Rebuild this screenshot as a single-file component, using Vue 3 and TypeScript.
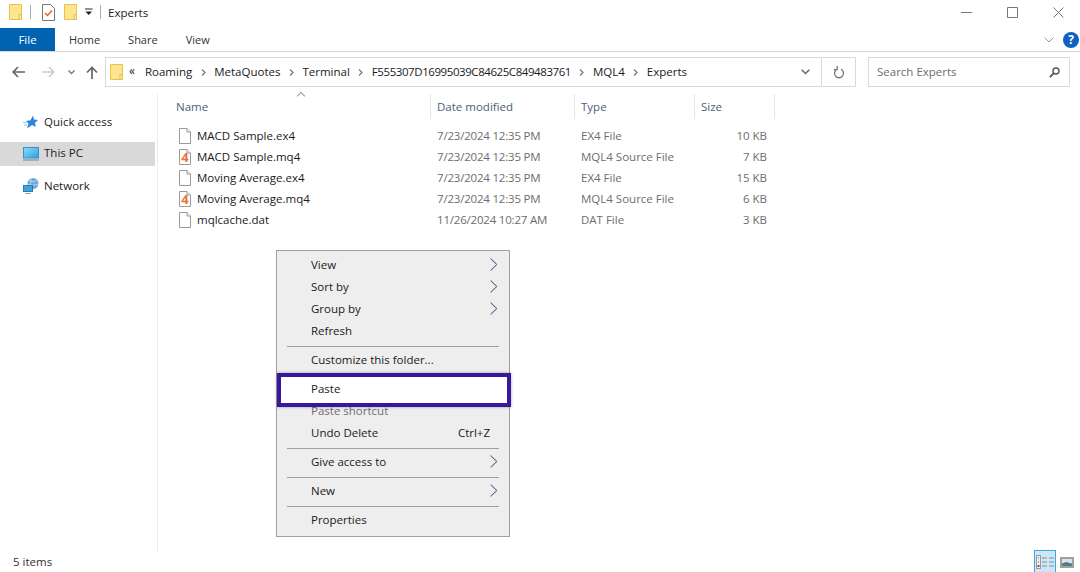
<script setup lang="ts">
interface FileRow {
  name: string
  date: string
  type: string
  size: string
  source: boolean
}

interface MenuEntry {
  label?: string
  sub?: boolean
  key?: string
  disabled?: boolean
  sep?: boolean
  paste?: boolean
}

const files: FileRow[] = [
  { name: 'MACD Sample.ex4', date: '7/23/2024 12:35 PM', type: 'EX4 File', size: '10 KB', source: false },
  { name: 'MACD Sample.mq4', date: '7/23/2024 12:35 PM', type: 'MQL4 Source File', size: '7 KB', source: true },
  { name: 'Moving Average.ex4', date: '7/23/2024 12:35 PM', type: 'EX4 File', size: '15 KB', source: false },
  { name: 'Moving Average.mq4', date: '7/23/2024 12:35 PM', type: 'MQL4 Source File', size: '6 KB', source: true },
  { name: 'mqlcache.dat', date: '11/26/2024 10:27 AM', type: 'DAT File', size: '3 KB', source: false },
]

const crumbs = ['Roaming', 'MetaQuotes', 'Terminal', 'F555307D16995039C84625C849483761', 'MQL4', 'Experts']
const tabs = ['Home', 'Share', 'View']

const menu: MenuEntry[] = [
  { label: 'View', sub: true },
  { label: 'Sort by', sub: true },
  { label: 'Group by', sub: true },
  { label: 'Refresh' },
  { sep: true },
  { label: 'Customize this folder...' },
  { sep: true },
  { label: 'Paste', paste: true },
  { label: 'Paste shortcut', disabled: true },
  { label: 'Undo Delete', key: 'Ctrl+Z' },
  { sep: true },
  { label: 'Give access to', sub: true },
  { sep: true },
  { label: 'New', sub: true },
  { sep: true },
  { label: 'Properties' },
]
</script>

<template>
  <div class="window">
    <header class="titlebar">
      <svg class="folder" width="13" height="16" viewBox="0 0 13 16"><path d="M.5.5h12v15H.5z" fill="#fde68f" stroke="#e8c14e"/><path d="M10 10.500h2.500v5H10z" fill="#fde68f" stroke="#e8c14e"/></svg>
      <i class="qsep"></i>
      <svg class="check" width="13" height="17" viewBox="0 0 13 17"><path d="M.5.5h8l4 4v12H.5z" fill="#fff" stroke="#777"/><path d="M3 9l2.500 2.500L10 6.500" fill="none" stroke="#e8622a" stroke-width="1.500"/></svg>
      <svg class="folder second" width="13" height="16" viewBox="0 0 13 16"><path d="M.5.5h12v15H.5z" fill="#fde68f" stroke="#e8c14e"/><path d="M10 10.500h2.500v5H10z" fill="#fde68f" stroke="#e8c14e"/></svg>
      <svg class="qdrop" width="8" height="8" viewBox="0 0 8 8"><path d="M0 1h7.500" stroke="#222"/><path d="M.5 3.500h6.500L3.750 7z" fill="#222"/></svg>
      <i class="qsep last"></i>
      <span class="title">Experts</span>
      <div class="winbtns">
        <svg width="11" height="11" viewBox="0 0 11 11"><path d="M0 5.500h11" stroke="#777"/></svg>
        <svg width="11" height="11" viewBox="0 0 11 11"><path d="M.5.5h10v10H.5z" fill="none" stroke="#777"/></svg>
        <svg width="11" height="11" viewBox="0 0 11 11"><path d="M.5.5l10 10M10.500.5l-10 10" stroke="#777"/></svg>
      </div>
    </header>

    <nav class="ribbon">
      <div class="filetab">File</div>
      <div class="tabs">
        <span v-for="t in tabs" :key="t">{{ t }}</span>
      </div>
      <svg class="collapse" width="10" height="6" viewBox="0 0 10 6"><path d="M.5.500L5 5 9.500.500" fill="none" stroke="#999"/></svg>
      <div class="help">?</div>
    </nav>

    <div class="addressrow">
      <svg class="navicon back" width="13" height="12" viewBox="0 0 13 12"><path d="M6 1L1.200 6 6 11M1.500 6H13" fill="none" stroke="#666" stroke-width="1.700"/></svg>
      <svg class="navicon fwd" width="13" height="12" viewBox="0 0 13 12"><path d="M7 1l4.800 5L7 11M11.500 6H0" fill="none" stroke="#ccc" stroke-width="1.700"/></svg>
      <svg class="navicon recent" width="7" height="5" viewBox="0 0 7 5"><path d="M.5.500l3 3 3-3" fill="none" stroke="#777" stroke-width="1.300"/></svg>
      <svg class="navicon up" width="12" height="13" viewBox="0 0 12 13"><path d="M1 6.500l5-5 5 5M6 2v11" fill="none" stroke="#666" stroke-width="1.700"/></svg>

      <div class="addressbar">
        <svg class="folder" width="13" height="16" viewBox="0 0 13 16"><path d="M.5.5h12v15H.5z" fill="#fde68f" stroke="#e8c14e"/><path d="M10 10.500h2.500v5H10z" fill="#fde68f" stroke="#e8c14e"/></svg>
        <span class="overflow">«</span>
        <template v-for="(c, i) in crumbs" :key="c">
          <span class="crumb" :class="{ hash: i === 3 }">{{ c }}</span>
          <svg v-if="i < crumbs.length - 1" class="crumbsep" width="5" height="7" viewBox="0 0 5 7"><path d="M1 .5l3 3-3 3" fill="none" stroke="#777" stroke-width="1.200"/></svg>
        </template>
        <svg class="addrdrop" width="9" height="6" viewBox="0 0 9 6"><path d="M.7.700l3.800 3.800L8.300.700" fill="none" stroke="#666" stroke-width="1.500"/></svg>
        <div class="refresh">
          <svg width="12" height="13" viewBox="0 0 12 13"><path d="M4 3.200a4.500 4.500 0 1 0 4 0M4.200 0v3.600H.8" fill="none" stroke="#777" stroke-width="1.300"/></svg>
        </div>
      </div>

      <div class="search">
        <span>Search Experts</span>
        <svg width="11" height="11" viewBox="0 0 11 11"><circle cx="7" cy="4" r="3" fill="none" stroke="#555" stroke-width="1.400"/><path d="M4.800 6.200L.8 10.200" stroke="#555" stroke-width="1.800"/></svg>
      </div>
    </div>

    <div class="body">
      <aside class="sidebar">
        <div class="navitem quick">
          <svg width="15" height="14" viewBox="0 0 15 14"><path d="M10 .5l1 4 4 .5-3 2.700 .8 4.300L9 10 4 13.500l1.500-5L3 6l4.500-.8z" fill="#2f86d6"/><path d="M0 7.500h3.500M1 10h3" stroke="#9cc7ec"/></svg>
          <span>Quick access</span>
        </div>
        <div class="navitem pc">
          <svg width="16" height="15" viewBox="0 0 16 15">
            <defs><linearGradient id="screen" x1="0" y1="0" x2="1" y2="1"><stop offset="0" stop-color="#8adcf8"/><stop offset="1" stop-color="#2f9fe0"/></linearGradient></defs>
            <rect x=".5" y=".5" width="15" height="10.500" fill="url(#screen)" stroke="#3a8fc4"/><path d="M0 13h16" stroke="#8fa0ad" stroke-width="1.500"/>
          </svg>
          <span>This PC</span>
        </div>
        <div class="navitem network">
          <svg width="16" height="16" viewBox="0 0 16 16"><circle cx="10" cy="5.500" r="5.500" fill="#6fa8d8"/><path d="M6 2.500c2 1.500 6 1.500 8 0M5 6c2 1.500 8 1.500 10 0M9 0c-2 3-2 8 0 11" stroke="#d3e6f5" fill="none" stroke-width=".7"/><rect x=".5" y="7.500" width="9" height="6" fill="#3fa3e0" stroke="#2a7ab0"/><path d="M2.500 15.500h5" stroke="#8a9aa8"/></svg>
          <span>Network</span>
        </div>
      </aside>

      <main class="content">
        <div class="sortarrow"></div>
        <div class="columns">
          <div class="col name">Name</div>
          <div class="col date">Date modified</div>
          <div class="col type">Type</div>
          <div class="col size">Size</div>
        </div>
        <div class="rows">
          <div v-for="f in files" :key="f.name" class="row">
            <div class="cell-name">
              <svg width="12" height="16" viewBox="0 0 12 16"><path d="M.5.500h7.500l3.500 3.500v11.500H.5z" fill="#fff" stroke="#9a9a9a"/><path d="M8 .500V4h3.500" fill="#f2f2f2" stroke="#9a9a9a"/><text v-if="f.source" x="6" y="13" class="four">4</text></svg>
              <span>{{ f.name }}</span>
            </div>
            <div class="cell-date">{{ f.date }}</div>
            <div class="cell-type">{{ f.type }}</div>
            <div class="cell-size">{{ f.size }}</div>
          </div>
        </div>
      </main>
    </div>

    <footer class="statusbar">
      <span>5 items</span>
      <div class="views">
        <div class="viewbtn details">
          <svg width="18" height="14" viewBox="0 0 18 14"><rect x=".5" y=".5" width="4" height="13" fill="#eee" stroke="#999"/><path d="M6 3h5M13 3h5M6 7h5M13 7h5M6 11h5M13 11h5" stroke="#888"/><path d="M2 2.500h1v1H2zM2 6.500h1v1H2z" fill="#666"/><path d="M1.500 10h2v2h-2z" fill="#c0392b"/></svg>
        </div>
        <div class="viewbtn thumbs">
          <svg width="14" height="11" viewBox="0 0 14 11"><rect x="1" y="1" width="12" height="9" fill="#d5e6ee" stroke="#a0a0a0" stroke-width="2"/><path d="M2 9V6.500l4-1.500 6 1.500V9z" fill="#4f7f7a"/></svg>
        </div>
      </div>
    </footer>

    <div class="menu">
      <template v-for="(m, i) in menu" :key="i">
        <div v-if="m.sep" class="sep" :class="{ hidden: menu[i + 1]?.paste }"></div>
        <div v-else class="item" :class="{ disabled: m.disabled, paste: m.paste }">
          <span>{{ m.label }}</span>
          <span v-if="m.key" class="shortcut">{{ m.key }}</span>
          <svg v-if="m.sub" class="arrow" width="8" height="13" viewBox="0 0 8 13"><path d="M.5.700l6 5.800-6 5.800" fill="none" stroke="#b5503f" stroke-width=".9"/><path d="M1 .700l6 5.800-6 5.800" fill="none" stroke="#3f6fb0" stroke-width=".9"/></svg>
        </div>
      </template>
    </div>
  </div>
</template>

<style>
html, body {
  margin: 0;
  background: #fff;
}
</style>

<style scoped>
.window {
  position: relative;
  width: 1080px;
  height: 572px;
  overflow: hidden;
  background: #fff;
  color: #1a1a1a;
  font-family: "Open Sans", "Noto Sans", sans-serif;
  font-size: 11.5px;
  display: flex;
  flex-direction: column;
}
svg {
  display: block;
  flex: none;
}

.titlebar {
  height: 28px;
  box-sizing: border-box;
  padding: 0 0 4px 9px;
  display: flex;
  align-items: center;
  flex: none;
}
.qsep {
  width: 1px;
  height: 14px;
  background: #aaa;
  margin: 0 11px 0 8px;
}
.qsep.last {
  margin: 0 7px 0 7px;
}
.second {
  margin-left: 9px;
}
.qdrop {
  margin-left: 8px;
}
.title {
  font-size: 11.5px;
  color: #222;
}
.winbtns {
  margin-left: auto;
  margin-right: 16px;
  display: flex;
  gap: 35px;
}

.ribbon {
  height: 23px;
  display: flex;
  align-items: center;
  border-bottom: 1px solid #d9d9d9;
  flex: none;
  padding-right: 1px;
}
.filetab {
  width: 55px;
  height: 23px;
  line-height: 23px;
  background: #0063b1;
  color: #fff;
  text-align: center;
}
.tabs {
  display: flex;
  gap: 28px;
  margin-left: 14px;
  color: #333;
  font-size: 11px;
}
.collapse {
  margin-left: auto;
  margin-right: 9px;
}
.help {
  width: 16px;
  height: 16px;
  border-radius: 50%;
  background: #0f62c0;
  color: #fff;
  font-weight: 700;
  font-size: 12px;
  line-height: 16px;
  text-align: center;
}

.addressrow {
  height: 40px;
  display: flex;
  align-items: center;
  padding-left: 12px;
  flex: none;
}
.navicon.back {
  margin-right: 17px;
}
.navicon.fwd {
  margin-right: 13px;
}
.navicon.recent {
  margin-right: 11px;
}
.navicon.up {
  margin-right: 7px;
}
.addressbar {
  width: 751px;
  height: 30px;
  box-sizing: border-box;
  border: 1px solid #d9d9d9;
  display: flex;
  align-items: center;
  padding-left: 4px;
}
.overflow {
  margin: -3px 10px 0 6px;
  font-size: 12px;
}
.crumb {
  color: #1a1a1a;
  padding-bottom: 2px;
}
.crumb.hash {
  letter-spacing: -0.43px;
}
.crumbsep {
  margin: 0 8.500px;
}
.addrdrop {
  margin-left: auto;
  margin-right: 11px;
}
.refresh {
  width: 33px;
  height: 28px;
  border-left: 1px solid #d9d9d9;
  display: flex;
  align-items: center;
  justify-content: center;
}
.search {
  width: 202px;
  height: 30px;
  box-sizing: border-box;
  margin-left: 12px;
  border: 1px solid #d9d9d9;
  display: flex;
  align-items: center;
  justify-content: space-between;
  padding: 0 9px 0 8px;
  color: #6d6d6d;
}
.search span {
  padding-bottom: 2px;
}

.body {
  flex: 1;
  display: flex;
  min-height: 0;
  padding-top: 2px;
}
.sidebar {
  width: 158px;
  box-sizing: border-box;
  border-right: 1px solid #ececec;
  padding-right: 2px;
  flex: none;
}
.navitem {
  height: 24px;
  display: flex;
  align-items: center;
  gap: 5px;
  padding-left: 23px;
  color: #222;
}
.navitem span {
  padding-bottom: 2px;
}
.navitem.quick {
  margin-top: 16px;
  gap: 6px;
}
.navitem.pc {
  margin-top: 8px;
  background: #d9d9d9;
}
.navitem.pc span {
  padding-bottom: 4px;
}
.navitem.network {
  margin-top: 8px;
}

.content {
  position: relative;
  flex: 1;
}
.sortarrow {
  position: absolute;
  left: 140px;
  top: -1px;
  width: 6px;
  height: 6px;
  box-sizing: border-box;
  border-left: 1px solid #999;
  border-top: 1px solid #999;
  transform: rotate(45deg);
}
.columns {
  display: flex;
  height: 25px;
  color: #4c607a;
}
.col {
  box-sizing: border-box;
  line-height: 25px;
  padding-left: 6px;
  border-right: 1px solid #e5e5e5;
}
.col.name {
  width: 273px;
  padding-left: 18px;
}
.col.date {
  width: 144px;
}
.col.type {
  width: 120px;
}
.col.size {
  width: 80px;
}
.rows {
  margin-top: 6px;
}
.row {
  display: flex;
  height: 21px;
  align-items: center;
  color: #6d6d6d;
}
.cell-name {
  width: 273px;
  box-sizing: border-box;
  padding-left: 21px;
  display: flex;
  align-items: center;
  gap: 6px;
  color: #1a1a1a;
}
.four {
  font-size: 13px;
  font-weight: 700;
  fill: #e8743a;
  text-anchor: middle;
}
.cell-date {
  width: 144px;
  box-sizing: border-box;
  padding-left: 6px;
  letter-spacing: -0.2px;
}
.cell-type {
  width: 120px;
  box-sizing: border-box;
  padding-left: 6px;
}
.cell-size {
  width: 72px;
  text-align: right;
}

.statusbar {
  height: 20px;
  display: flex;
  align-items: center;
  justify-content: space-between;
  padding-left: 13px;
  flex: none;
  color: #333;
}
.statusbar > span {
  padding-bottom: 2px;
}
.views {
  display: flex;
  align-items: center;
  gap: 4px;
  margin-right: 6px;
}
.viewbtn {
  display: flex;
  align-items: center;
  justify-content: center;
}
.viewbtn.details {
  width: 22px;
  height: 22px;
  margin-top: -2px;
  box-sizing: border-box;
  background: #cce8f6;
  border: 1px solid #3fa7e0;
  border-bottom: none;
}

.menu {
  position: absolute;
  left: 276px;
  top: 250px;
  width: 234px;
  box-sizing: border-box;
  background: #eeeeee;
  border: 1px solid #a0a0a0;
  padding: 3px 2px 5px;
}
.item {
  position: relative;
  height: 22px;
  line-height: 22px;
  padding-left: 32px;
  color: #1a1a1a;
}
.item.disabled {
  color: #6e6e6e;
}
.item.paste {
  z-index: 1;
}
.item.paste::before {
  content: "";
  position: absolute;
  left: -2px;
  right: -4px;
  top: -5px;
  bottom: -7px;
  box-sizing: border-box;
  background: #fff;
  border: 4px solid #37179b;
  box-shadow: 0 0 3px rgba(0, 0, 0, 0.35);
  z-index: -1;
}
.shortcut {
  position: absolute;
  right: 17px;
}
.arrow {
  position: absolute;
  right: 9px;
  top: 4px;
}
.sep {
  height: 1px;
  margin: 4px 8px 2px;
  background: #a0a0a0;
}
.sep.hidden {
  visibility: hidden;
}
</style>
